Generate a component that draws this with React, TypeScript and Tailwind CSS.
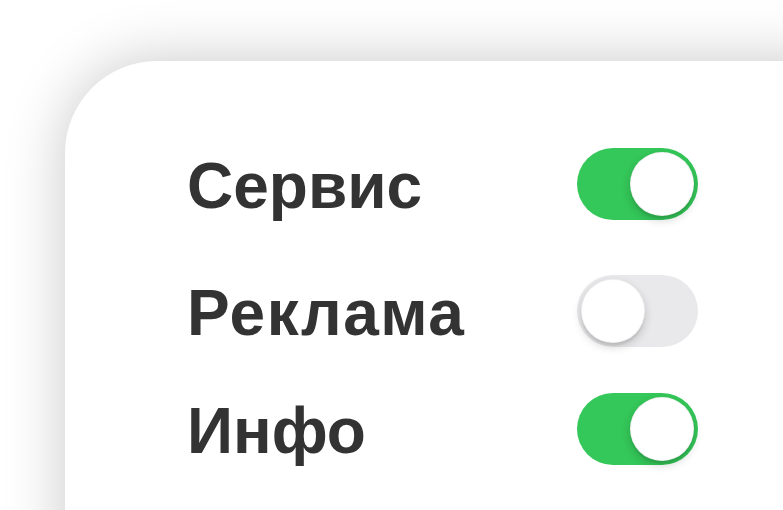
import React from "react";

function Toggle({ on }: { on: boolean }) {
  return (
    <div
      className={
        "relative h-[72px] w-[121px] shrink-0 rounded-full " +
        (on ? "bg-[#34c759]" : "bg-[#e9e9eb]")
      }
    >
      <div
        className={
          "absolute top-[4px] h-[64px] w-[64px] rounded-full bg-white border border-black/5 shadow-[0_4px_10px_rgba(0,0,0,0.18),0_3px_1px_rgba(0,0,0,0.06)] " +
          (on ? "left-[53px]" : "left-[4px]")
        }
      />
    </div>
  );
}

const rows: { label: string; on: boolean; mt: string; track: string }[] = [
  { label: "Сервис", on: true, mt: "mt-0", track: "tracking-normal" },
  { label: "Реклама", on: false, mt: "mt-[55px]", track: "tracking-[1.5px]" },
  { label: "Инфо", on: true, mt: "mt-[46px]", track: "tracking-normal" },
];

export default function App() {
  return (
    <div className="h-[510px] w-full overflow-hidden bg-white pl-[65px] pt-[61px]">
      <div className="h-[560px] w-[820px] rounded-[92px] bg-white pl-[122px] pt-[87px] shadow-[0_0_60px_rgba(0,0,0,0.22)]">
        {rows.map((r) => (
          <div key={r.label} className={"flex h-[72px] items-center " + r.mt}>
            <div
              className={
                "w-[390px] shrink-0 pt-[4px] text-[64px] font-bold leading-none text-[#333333] " +
                r.track
              }
              style={{ fontFamily: '"Liberation Sans", Arial, sans-serif' }}
            >
              {r.label}
            </div>
            <Toggle on={r.on} />
          </div>
        ))}
      </div>
    </div>
  );
}
